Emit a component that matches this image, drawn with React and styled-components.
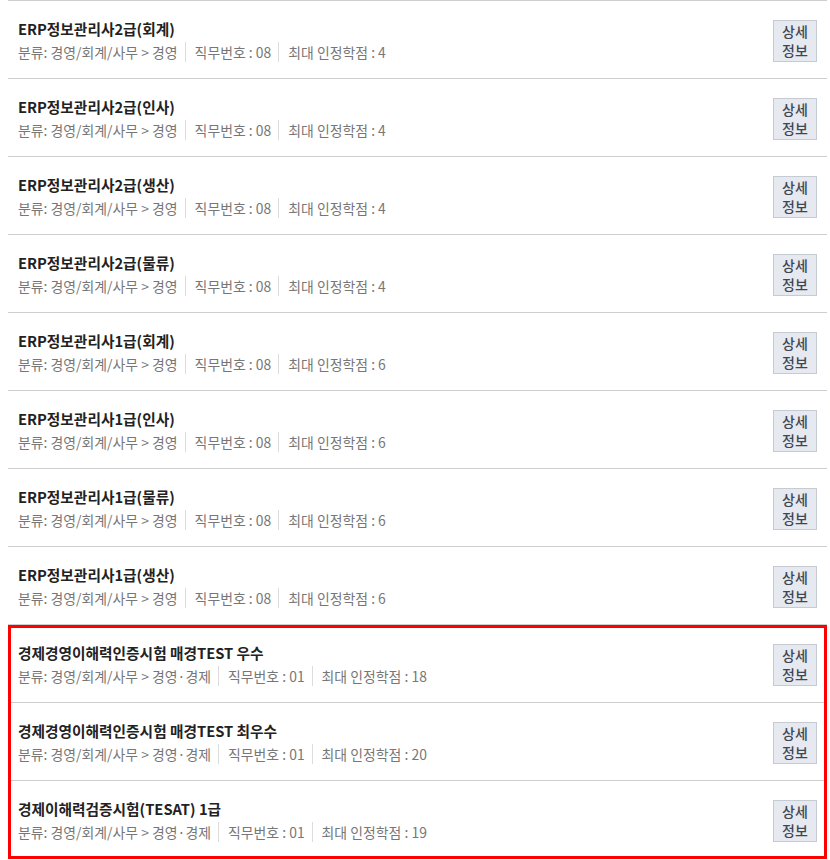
import React from 'react';
import styled, { createGlobalStyle } from 'styled-components';

const GlobalStyle = createGlobalStyle`
  html, body {
    margin: 0;
    padding: 0;
    background: #fff;
  }
  body {
    font-family: "Noto Sans CJK KR", "Noto Sans", sans-serif;
  }
`;

const ListWrap = styled.ul`
  list-style: none;
  margin: 0 0 0 8px;
  padding: 0;
  width: 819px;
  border-top: 1px solid #cfcfcf;
`;

const Highlight = styled.li`
  outline: 3px solid #ff0000;
  outline-offset: -3px;
  position: relative;
  z-index: 1;
`;

const HighlightList = styled.ul`
  list-style: none;
  margin: 0;
  padding: 0;
`;

const Row = styled.li`
  display: flex;
  align-items: center;
  justify-content: space-between;
  height: 77px;
  padding: 0 10px;
  border-bottom: 1px solid #cfcfcf;
`;

const Info = styled.div`
  display: flex;
  flex-direction: column;
  padding-top: 1px;
`;

const Title = styled.div`
  font-size: 14.7px;
  font-weight: 700;
  color: #222;
  line-height: 22px;
`;

const Meta = styled.div`
  display: flex;
  align-items: center;
  margin-top: 2px;
  font-size: 13.9px;
  color: #777;
  line-height: 20px;
`;

const MetaItem = styled.span`
  & + & {
    border-left: 1px solid #dcdcdc;
    margin-left: 7px;
    padding-left: 9px;
  }
`;

const DetailButton = styled.button`
  width: 44px;
  height: 42px;
  margin-top: 2px;
  padding: 0;
  border: 1px solid #c6cad2;
  background: #e6e9ef;
  color: #3f4654;
  font-family: "Noto Sans CJK KR", "Noto Sans", sans-serif;
  font-size: 14px;
  font-weight: 500;
  line-height: 19px;
  cursor: pointer;
`;

const items = [
  { name: 'ERP정보관리사2급(회계)', cat: '경영/회계/사무 > 경영', no: '08', credit: 4 },
  { name: 'ERP정보관리사2급(인사)', cat: '경영/회계/사무 > 경영', no: '08', credit: 4 },
  { name: 'ERP정보관리사2급(생산)', cat: '경영/회계/사무 > 경영', no: '08', credit: 4 },
  { name: 'ERP정보관리사2급(물류)', cat: '경영/회계/사무 > 경영', no: '08', credit: 4 },
  { name: 'ERP정보관리사1급(회계)', cat: '경영/회계/사무 > 경영', no: '08', credit: 6 },
  { name: 'ERP정보관리사1급(인사)', cat: '경영/회계/사무 > 경영', no: '08', credit: 6 },
  { name: 'ERP정보관리사1급(물류)', cat: '경영/회계/사무 > 경영', no: '08', credit: 6 },
  { name: 'ERP정보관리사1급(생산)', cat: '경영/회계/사무 > 경영', no: '08', credit: 6 },
];

const marked = [
  { name: '경제경영이해력인증시험 매경TEST 우수', cat: '경영/회계/사무 > 경영·경제', no: '01', credit: 18 },
  { name: '경제경영이해력인증시험 매경TEST 최우수', cat: '경영/회계/사무 > 경영·경제', no: '01', credit: 20 },
  { name: '경제이해력검증시험(TESAT) 1급', cat: '경영/회계/사무 > 경영·경제', no: '01', credit: 19 },
];

function CertRow({ item }) {
  return (
    <Row>
      <Info>
        <Title>{item.name}</Title>
        <Meta>
          <MetaItem>분류: {item.cat}</MetaItem>
          <MetaItem>직무번호 : {item.no}</MetaItem>
          <MetaItem>최대 인정학점 : {item.credit}</MetaItem>
        </Meta>
      </Info>
      <DetailButton type="button">
        상세
        <br />
        정보
      </DetailButton>
    </Row>
  );
}

export default function App() {
  return (
    <>
      <GlobalStyle />
      <ListWrap>
        {items.map((item) => (
          <CertRow key={item.name} item={item} />
        ))}
        <Highlight>
          <HighlightList>
            {marked.map((item) => (
              <CertRow key={item.name} item={item} />
            ))}
          </HighlightList>
        </Highlight>
      </ListWrap>
    </>
  );
}
